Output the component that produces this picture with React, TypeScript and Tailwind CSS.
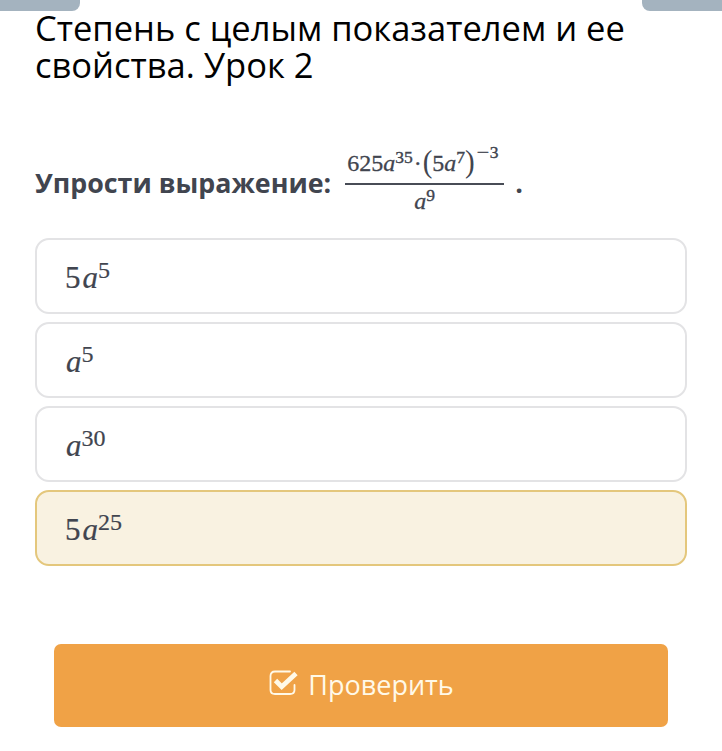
import type { ReactNode } from 'react'
import clsx from 'clsx'

const options = [
  { coef: '5', power: '5' },
  { coef: '', power: '5' },
  { coef: '', power: '30' },
  { coef: '5', power: '25', selected: true },
]

function Sup({ high, children }: { high?: boolean; children: ReactNode }) {
  return (
    <span className={clsx('text-[17.5px] leading-[0] [-webkit-text-stroke:0.4px]', high ? 'align-[13px]' : 'align-[8px]')}>
      {children}
    </span>
  )
}

function Paren({ children }: { children: string }) {
  return <span className="inline-block origin-[50%_70%] scale-y-110 text-[29px] leading-[0] [-webkit-text-stroke:0]">{children}</span>
}

function Fraction() {
  return (
    <div className="ml-[14px] w-[159px] font-['Liberation_Serif',serif] text-[24px] leading-[24px] [-webkit-text-stroke:0.3px]">
      <div className="h-[39px] whitespace-nowrap border-b-2 border-[#484c56] pl-[2px] pt-[5px]">
        <span>625<i>a</i></span>
        <Sup>35</Sup>
        <span className="mx-px">·</span>
        <Paren>(</Paren>
        <span>5<i>a</i></span>
        <Sup>7</Sup>
        <Paren>)</Paren>
        <Sup high><span className="ml-[3px] mr-[2px] inline-block scale-x-125">−</span>3</Sup>
      </div>
      <div className="h-[30px] pt-[4px] text-center">
        <i>a</i><Sup>9</Sup>
      </div>
    </div>
  )
}

function CheckIcon() {
  return (
    <svg viewBox="0 0 30 26" className="mt-[-5px] h-[26px] w-[30px]" fill="none">
      <path d="M22 1.5H7Q2.5 1.5 2.5 6v14q0 4 4.5 4h15q4.5 0 4.5-4v-5" stroke="#fff9e8" strokeWidth="1.8" strokeLinecap="round" />
      <path d="M7.5 10.500l6.200 6.200L28 3.500" stroke="#fff9e8" strokeWidth="4.8" />
    </svg>
  )
}

export default function App() {
  return (
    <div className="h-[751px] w-[722px] overflow-hidden bg-white font-['Open_Sans','Noto_Sans',sans-serif] text-[#41454f]">
      <div className="flex h-[11px] justify-between">
        <div className="w-[80px] rounded-br-[8px] bg-[#a4b3bf]" />
        <div className="w-[80px] rounded-bl-[8px] bg-[#a4b3bf]" />
      </div>

      <h1 className="-mt-[2px] ml-[35px] h-[137px] whitespace-nowrap text-[34.5px] leading-[37px] text-black">
        Степень с целым показателем и ее
        <br />
        свойства. Урок 2
      </h1>

      <div className="ml-[35px] flex h-[92px]">
        <p className="pt-[18px] text-[26.8px] font-bold leading-[37px]">Упрости выражение:</p>
        <Fraction />
        <span className="ml-[11px] pt-[18px] text-[27px] font-bold leading-[37px]">.</span>
      </div>

      <div className="ml-[35px] flex w-[652px] flex-col gap-[8px]">
        {options.map((o, i) => (
          <button
            key={i}
            className={clsx(
              "h-[76px] w-full rounded-[14px] border-2 pl-[28px] pt-[4px] text-left font-['Liberation_Serif',serif] text-[31px] leading-[36px] [-webkit-text-stroke:0.2px]",
              o.selected ? 'border-[#e4c77c] bg-[#f9f2e1]' : 'border-[#e3e3e5] bg-white',
            )}
          >
            {o.coef && <span className="mr-px">{o.coef}</span>}
            <i className="ml-px">a</i>
            <span className="align-[10px] text-[24px] leading-[0]">{o.power}</span>
          </button>
        ))}
      </div>

      <button className="ml-[54px] mt-[78px] flex h-[83px] w-[614px] items-center justify-center gap-[10px] rounded-[7px] bg-[#f0a246] text-[27px] text-[#fff9e8]">
        <CheckIcon />
        <span>Проверить</span>
      </button>
    </div>
  )
}
